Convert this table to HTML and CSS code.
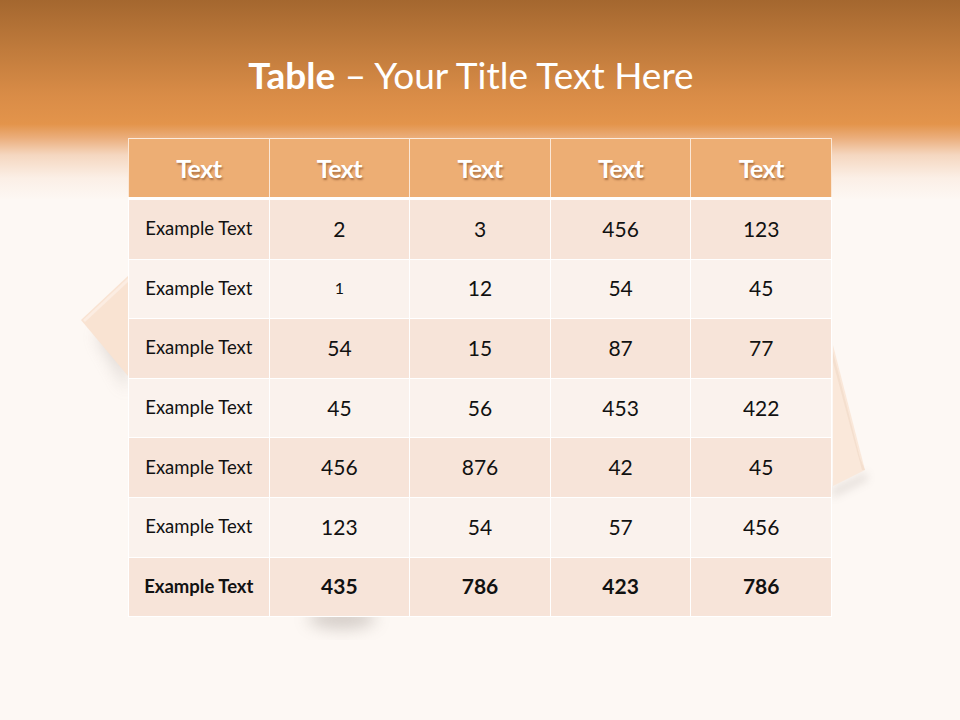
FILE: index.html
```html
<!DOCTYPE html>
<html>
<head>
<meta charset="utf-8">
<link rel="stylesheet" href="styles.css">
</head>
<body>
<div class="slide">
  <svg class="deco" width="960" height="720" viewBox="0 0 960 720">
    <defs>
      <filter id="blur" x="-50%" y="-50%" width="200%" height="200%"><feGaussianBlur stdDeviation="8"/></filter>
      <filter id="blur2" x="-50%" y="-50%" width="200%" height="200%"><feGaussianBlur stdDeviation="4"/></filter>
    </defs>
    <ellipse cx="342" cy="618" rx="34" ry="11" fill="#8a7f78" opacity="0.35" filter="url(#blur)"/>
    <polygon points="128,305 96,336 128,392" fill="#9a8f88" opacity="0.28" filter="url(#blur)"/>
    <polygon points="128,276 81,320 128,376" fill="#F9E3D2"/>
    <polygon points="128,278 83,320 85,322 128,282" fill="#FCEFE6" opacity="0.8"/>
    <polygon points="832,488 866,472 868,480 832,498" fill="#9a8f88" opacity="0.22" filter="url(#blur2)"/>
    <polygon points="833,345 865,470 833,486" fill="#FAE8DA"/>
    <polygon points="833,352 860,458 865,470 862,470 833,362" fill="#F0D8C6" opacity="0.6"/>
  </svg>
  <header class="top">
    <h1 class="title"><b>Table</b> – Your Title Text Here</h1>
  </header>
  <table class="grid">
    <thead>
      <tr><th>Text</th><th>Text</th><th>Text</th><th>Text</th><th>Text</th></tr>
    </thead>
    <tbody>
      <tr class="odd"><td class="lbl">Example Text</td><td>2</td><td>3</td><td>456</td><td>123</td></tr>
      <tr class="even"><td class="lbl">Example Text</td><td class="small">1</td><td>12</td><td>54</td><td>45</td></tr>
      <tr class="odd"><td class="lbl">Example Text</td><td>54</td><td>15</td><td>87</td><td>77</td></tr>
      <tr class="even"><td class="lbl">Example Text</td><td>45</td><td>56</td><td>453</td><td>422</td></tr>
      <tr class="odd"><td class="lbl">Example Text</td><td>456</td><td>876</td><td>42</td><td>45</td></tr>
      <tr class="even"><td class="lbl">Example Text</td><td>123</td><td>54</td><td>57</td><td>456</td></tr>
      <tr class="odd total"><td class="lbl">Example Text</td><td>435</td><td>786</td><td>423</td><td>786</td></tr>
    </tbody>
  </table>
</div>
</body>
</html>
```
FILE: styles.css
```css
html, body {
  margin: 0;
  padding: 0;
}
body {
  width: 960px;
  height: 720px;
  overflow: hidden;
  background: #FDF8F4;
  font-family: Lato, "Open Sans", sans-serif;
}
.slide {
  position: relative;
  width: 960px;
  height: 720px;
  display: flex;
  flex-direction: column;
  align-items: center;
  background: linear-gradient(to bottom,
    #A4672F 0px,
    #C07B3C 50px,
    #D98C47 95px,
    #E3944B 124px,
    #EBAE7C 138px,
    #F5D7C0 155px,
    #FBEFE6 178px,
    #FDF8F4 200px,
    #FDF8F4 720px);
}
.deco {
  position: absolute;
  left: 0;
  top: 0;
  pointer-events: none;
}
.top {
  position: relative;
  height: 138px;
  width: 100%;
  display: flex;
  justify-content: center;
}
.title {
  margin: 50px 18px 0 0;
  font-size: 37px;
  font-weight: 400;
  color: #FFFFFF;
  line-height: 50px;
  letter-spacing: 0px;
}
.title b {
  font-weight: 700;
}
.grid {
  position: relative;
  width: 704px;
  border-collapse: collapse;
  table-layout: fixed;
  border: 1px solid #FCEBDD;
}
.grid th {
  height: 58px;
  padding: 0;
  background: #EDAE74;
  color: #FFFFFF;
  font-size: 25px;
  font-weight: 700;
  letter-spacing: -0.6px;
  text-shadow: 1px 2px 2px rgba(90, 40, 10, 0.45);
  border-left: 1px solid #FBE7D6;
  border-right: 1px solid #FBE7D6;
  border-bottom: 3px solid #FFFFFF;
}
.grid td {
  height: 56.6px;
  padding: 0 0 2px 0;
  text-align: center;
  color: #111111;
  font-size: 21px;
  border-left: 1px solid #FFFFFF;
  border-right: 1px solid #FFFFFF;
  border-bottom: 1px solid #FFFFFF;
}
.grid td.lbl {
  font-size: 18.5px;
}
.grid td.small {
  font-size: 16px;
}
.grid tr.odd td {
  background: #F7E4D9;
}
.grid tr.even td {
  background: #FAF2ED;
}
.grid tr.total td {
  font-weight: 700;
}
```
